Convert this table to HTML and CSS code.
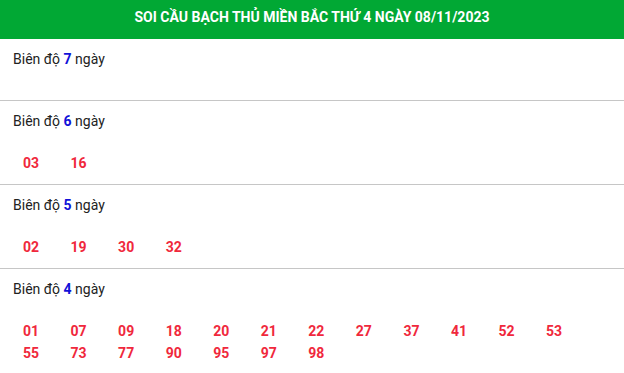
FILE: index.html
```html
<!DOCTYPE html>
<html lang="vi">
<head>
<meta charset="utf-8">
<title>Soi cầu bạch thủ</title>
<link rel="stylesheet" href="styles.css">
</head>
<body>
<div class="box">
  <div class="head">SOI CẦU BẠCH THỦ MIỀN BẮC THỨ 4 NGÀY 08/11/2023</div>
  <div class="sec">
    <div class="title">Biên độ <b>7</b> ngày</div>
    <div class="nums"></div>
  </div>
  <div class="sec">
    <div class="title">Biên độ <b>6</b> ngày</div>
    <div class="nums"><span>03</span><span>16</span></div>
  </div>
  <div class="sec">
    <div class="title">Biên độ <b>5</b> ngày</div>
    <div class="nums"><span>02</span><span>19</span><span>30</span><span>32</span></div>
  </div>
  <div class="sec">
    <div class="title">Biên độ <b>4</b> ngày</div>
    <div class="nums"><span>01</span><span>07</span><span>09</span><span>18</span><span>20</span><span>21</span><span>22</span><span>27</span><span>37</span><span>41</span><span>52</span><span>53</span><span>55</span><span>73</span><span>77</span><span>90</span><span>95</span><span>97</span><span>98</span></div>
  </div>
</div>
</body>
</html>
```
FILE: styles.css
```css
html, body {
  margin: 0;
  padding: 0;
  background: #fff;
}
body {
  font-family: Roboto, "Liberation Sans", Arial, sans-serif;
  font-size: 14px;
  color: #222;
}
.head {
  background: #01a834;
  color: #fff;
  font-weight: 700;
  font-size: 14px;
  line-height: 22px;
  padding: 6px 0 11px;
  text-align: center;
}
.sec {
  padding: 9px 10px 10px 13px;
  border-bottom: 1px solid #c6c6c6;
}
.title {
  line-height: 22px;
}
.title b {
  color: #1111d8;
  font-weight: 700;
}
.nums {
  margin-top: 20px;
  margin-left: 10px;
  display: grid;
  grid-template-columns: repeat(12, 47.55px);
}
.nums span {
  line-height: 22px;
  font-weight: 700;
  color: #f0283c;
}
```
